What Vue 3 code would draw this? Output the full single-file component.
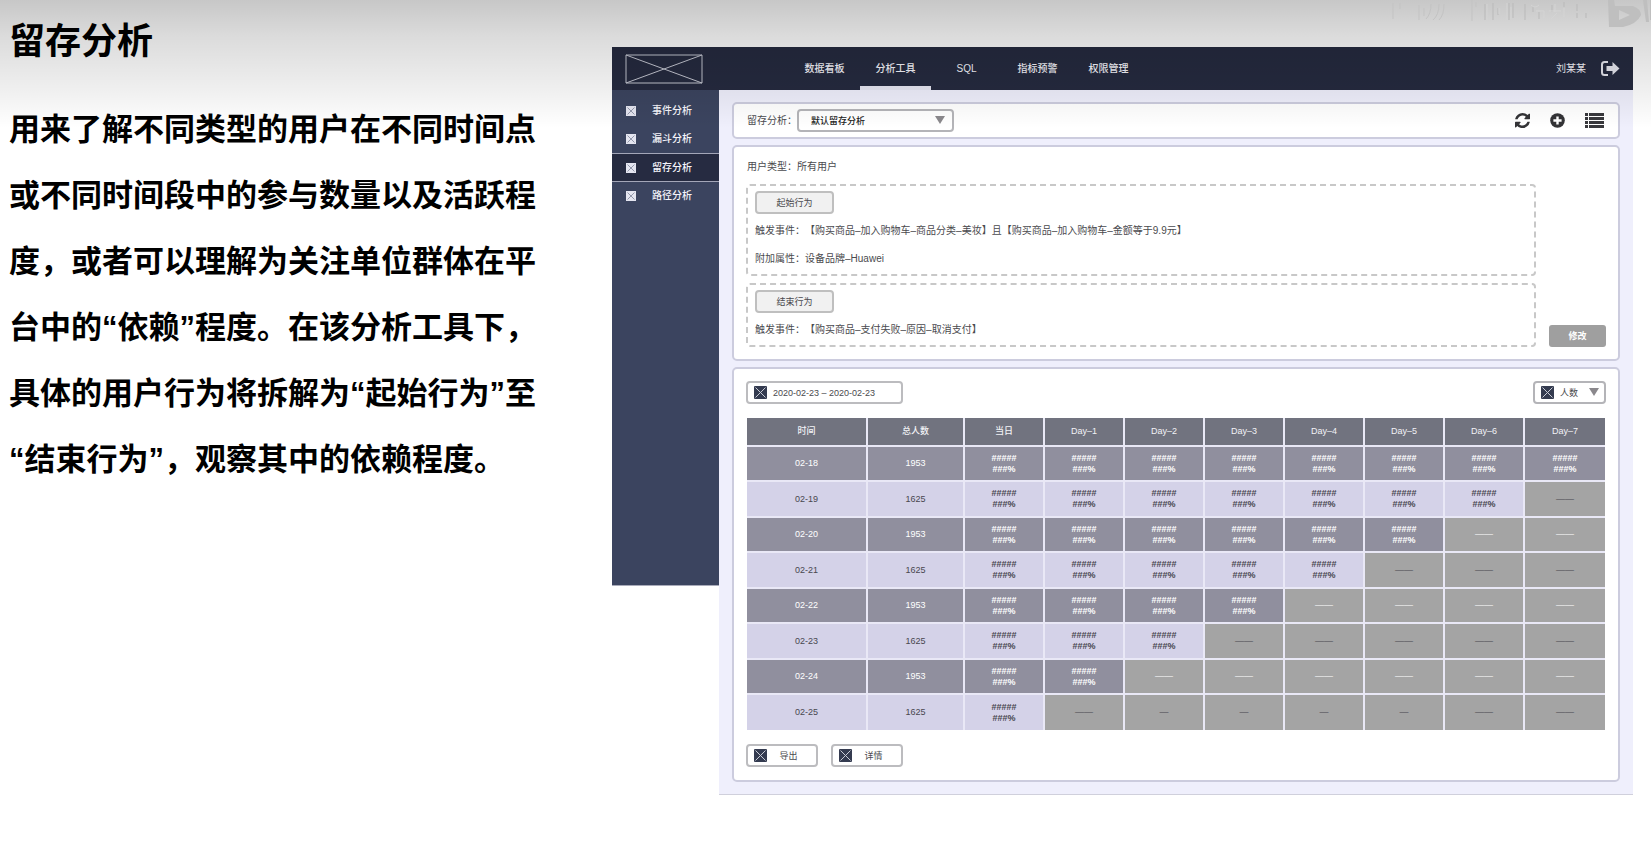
<script setup>
import { ref } from 'vue'

const tabs = ['数据看板', '分析工具', 'SQL', '指标预警', '权限管理']
const activeTab = ref('分析工具')
const menu = ['事件分析', '漏斗分析', '留存分析', '路径分析']
const activeMenu = ref('留存分析')

const columns = ['时间', '总人数', '当日', 'Day–1', 'Day–2', 'Day–3', 'Day–4', 'Day–5', 'Day–6', 'Day–7']
const days = 8
const rows = Array.from({ length: 8 }, (_, i) => ({
  date: `02-${18 + i}`,
  total: i % 2 ? 1625 : 1953,
  cells: Array.from({ length: days }, (_, d) => {
    if (d < days - i) return { filled: true }
    return { filled: false, mark: i === 7 && d > 1 && d < 6 ? '—' : '——' }
  }),
}))
</script>

<template>
  <div class="page">
    <article class="intro">
      <h1>留存分析</h1>
      <p>
        用来了解不同类型的用户在不同时间点<br />或不同时间段中的参与数量以及活跃程<br />度，或者可以理解为关注单位群体在平<br />台中的“依赖”程度。在该分析工具下，<br />具体的用户行为将拆解为“起始行为”至<br />“结束行为”，观察其中的依赖程度。
      </p>
    </article>

    <div class="app">
      <header class="topbar">
        <svg class="logo" viewBox="0 0 78 30" aria-hidden="true">
          <path d="M1 1h76v28H1zM1 1l76 28M77 1L1 29" fill="none" stroke="#c3c5d0" stroke-width="1" />
        </svg>
        <nav class="tabs">
          <a v-for="t in tabs" :key="t" href="#" :class="{ active: t === activeTab }" @click.prevent="activeTab = t">{{ t }}</a>
        </nav>
        <span class="user">刘某某</span>
        <button class="icon-btn" aria-label="退出">
          <svg width="19" height="15" viewBox="0 0 19 15">
            <path d="M7 1H3.500Q1 1 1 3.500v8Q1 14 3.500 14H7" fill="none" stroke="#e6e7ef" stroke-width="2" />
            <path d="M5.500 5h6V1l7 6.500-7 6.500v-4h-6z" fill="#e6e7ef" />
          </svg>
        </button>
      </header>

      <div class="body">
        <aside class="sidebar">
          <a v-for="m in menu" :key="m" href="#" :class="{ active: m === activeMenu }" @click.prevent="activeMenu = m">
            <svg width="10" height="10" viewBox="0 0 10 10" aria-hidden="true">
              <path d="M0 0h10v10H0z" fill="#e4e5f0" />
              <path d="M1.500 1.500l7 7M8.500 1.500l-7 7" stroke="#9398ab" stroke-width="1" />
            </svg>
            {{ m }}
          </a>
        </aside>

        <main class="content">
          <section class="card toolbar">
            <label for="preset">留存分析：</label>
            <span class="picker preset">
              <select id="preset"><option>默认留存分析</option></select>
              <svg class="arrow" width="10" height="8" viewBox="0 0 10 8"><path d="M0 0h10L5 8z" fill="#8a888c" /></svg>
            </span>
            <div class="actions">
              <button class="icon-btn" aria-label="刷新">
                <svg width="15" height="15" viewBox="0 0 1536 1536">
                  <path fill="#333336" d="M1511 928q0 5-1 7-64 268-268 434.500T764 1536q-146 0-282.500-55T238 1324l-129 129q-19 19-45 19t-45-19-19-45V960q0-26 19-45t45-19h448q26 0 45 19t19 45-19 45l-137 137q71 66 161 102t187 36q134 0 250-65t186-179q11-17 53-117 8-23 30-23h192q13 0 22.500 9.500t9.500 22.500zm25-800v448q0 26-19 45t-45 19h-448q-26 0-45-19t-19-45 19-45l138-138Q969 256 768 256q-134 0-250 65T332 500q-11 17-53 117-8 23-30 23H50q-13 0-22.500-9.500T18 608v-7q65-268 270-434.500T768 0q146 0 284 55.500T1297 212l130-129q19-19 45-19t45 19 19 45z" />
                </svg>
              </button>
              <button class="icon-btn" aria-label="新增">
                <svg width="15" height="15" viewBox="0 0 15 15">
                  <circle cx="7.500" cy="7.500" r="7.300" fill="#333336" />
                  <path d="M7.500 3.400v8.200M3.400 7.500h8.200" stroke="#fff" stroke-width="2.400" />
                </svg>
              </button>
              <button class="icon-btn" aria-label="列表">
                <svg width="19" height="15" viewBox="0 0 19 15">
                  <path d="M0 0h3v3H0zM0 4h3v3H0zM0 8h3v3H0zM0 12h3v3H0zM4 0h15v3H4zM4 4h15v3H4zM4 8h15v3H4zM4 12h15v3H4z" fill="#38383c" />
                </svg>
              </button>
            </div>
          </section>

          <section class="card rules">
            <p class="usertype">用户类型：所有用户</p>
            <div class="rules-row">
              <div class="groups">
                <div class="group">
                  <button class="tag">起始行为</button>
                  <p>触发事件：【购买商品–加入购物车–商品分类–美妆】且【购买商品–加入购物车–金额等于9.9元】</p>
                  <p>附加属性：设备品牌–Huawei</p>
                </div>
                <div class="group">
                  <button class="tag">结束行为</button>
                  <p>触发事件：【购买商品–支付失败–原因–取消支付】</p>
                </div>
              </div>
              <button class="modify">修改</button>
            </div>
          </section>

          <section class="card report">
            <div class="filters">
              <button class="box date">
                <svg class="mark" viewBox="0 0 13 13" aria-hidden="true"><rect width="13" height="13" rx="1" fill="#343b50" /><path d="M1.500 1.500l10 10M11.500 1.500l-10 10" stroke="#c9ccd6" /></svg>
                2020-02-23 – 2020-02-23
              </button>
              <span class="picker metric">
                <svg class="mark" viewBox="0 0 13 13" aria-hidden="true"><rect width="13" height="13" rx="1" fill="#343b50" /><path d="M1.500 1.500l10 10M11.500 1.500l-10 10" stroke="#c9ccd6" /></svg>
                <select aria-label="指标"><option>人数</option></select>
                <svg class="arrow" width="10" height="8" viewBox="0 0 10 8"><path d="M0 0h10L5 8z" fill="#8a888c" /></svg>
              </span>
            </div>

            <table>
              <thead>
                <tr><th v-for="c in columns" :key="c" scope="col">{{ c }}</th></tr>
              </thead>
              <tbody>
                <tr v-for="r in rows" :key="r.date">
                  <td>{{ r.date }}</td>
                  <td>{{ r.total }}</td>
                  <td v-for="(c, i) in r.cells" :key="i" :class="c.filled ? 'value' : 'empty'">
                    <template v-if="c.filled">#####<br />###%</template>
                    <template v-else>{{ c.mark }}</template>
                  </td>
                </tr>
              </tbody>
            </table>

            <div class="buttons">
              <button v-for="b in ['导出', '详情']" :key="b" class="box small">
                <svg class="mark" viewBox="0 0 13 13" aria-hidden="true"><rect width="13" height="13" rx="1" fill="#343b50" /><path d="M1.500 1.500l10 10M11.500 1.500l-10 10" stroke="#c9ccd6" /></svg>
                <span>{{ b }}</span>
              </button>
            </div>
          </section>
        </main>
      </div>
    </div>

    <div class="shade"></div>
    <svg class="watermark" width="280" height="40" viewBox="0 0 280 40" aria-hidden="true">
      <path d="M22 3v16M29 3v6M48 5v15M53 8v8M60 4q0 10-5 15M68 4q0 11-6 16M73 4q0 11-5 16M101 0v21M105 2v5" fill="none" stroke="#c3c3c3" />
      <path d="M114 4v16M122 3v17M127 8v7M138 3v17M142 3v15M154 4v16M162 6v6M168 12v7M181 5v7M193 2v5M206 4v7M206 13v5M215 13v5" fill="none" stroke="#b9b9b9" />
      <path d="M116 4v16M128 8v6M136 3v17M140 7v12M160 5q4 4 8 0M165 11h8v7M178 11h12M184 4v8M180 19l6-6M193 8v9" fill="none" stroke="#d4d4d4" />
      <path fill-rule="evenodd" d="M237 0h6l1 6 18 0q8 3 8 9-4 9-18 12h-14zM248 10v10l11-5z" fill="#bfbfbf" />
      <path d="M272 0h4l2 22h-3zM279 0h1v20h-1z" fill="#bfbfbf" />
    </svg>
  </div>
</template>

<style>
body {
  margin: 0;
  background: #fff;
}
</style>

<style scoped>
* {
  box-sizing: border-box;
}
.page {
  position: relative;
  min-height: 100vh;
  display: grid;
  grid-template-columns: 612px 1fr;
  align-items: start;
  overflow: hidden;
  font-family: "Liberation Sans", "Noto Sans CJK SC", sans-serif;
  font-size: 10px;
  line-height: 14px;
  text-spacing-trim: space-all;
  color: #4a4a4e;
}
.shade {
  position: absolute;
  inset: 0 0 auto;
  height: 128px;
  background: linear-gradient(rgba(0, 0, 0, 0.22), rgba(0, 0, 0, 0.14) 36px, rgba(0, 0, 0, 0.06) 92px, rgba(0, 0, 0, 0));
  pointer-events: none;
}
.watermark {
  position: absolute;
  top: 0;
  right: 0;
}
p,
h1 {
  margin: 0;
}
button,
select {
  font: inherit;
  color: inherit;
  padding: 0;
  margin: 0;
}
a {
  color: inherit;
  text-decoration: none;
}

.intro {
  padding: 15px 0 0 9px;
  color: #000;
  font-weight: 700;
  white-space: nowrap;
}
.intro h1 {
  font-size: 36px;
  line-height: 54px;
}
.intro p {
  margin-top: 28px;
  font-size: 31px;
  line-height: 66px;
}

.app {
  margin: 47px 18px 0 0;
  min-width: 0;
}
.topbar {
  display: flex;
  align-items: center;
  height: 43px;
  padding: 0 13px;
  background: #252a3f;
  color: #f4f4fa;
}
.logo {
  width: 78px;
  height: 30px;
}
.tabs {
  display: flex;
  margin: 0 auto 0 86px;
  align-self: stretch;
  font-weight: 500;
}
.tabs a {
  width: 71px;
  line-height: 43px;
  text-align: center;
}
.tabs a.active {
  border-bottom: 4px solid #e6e6f2;
}
.user {
  margin-right: 15px;
}
.icon-btn {
  display: flex;
  border: 0;
  background: none;
}

.body {
  display: flex;
  align-items: flex-start;
}
.sidebar {
  flex: 0 0 107px;
  min-height: 496px;
  padding-top: 7px;
  background: #3b445f;
  border-bottom: 1px solid #a9abba;
  color: #f4f4fa;
  font-weight: 500;
}
.sidebar a {
  display: flex;
  align-items: center;
  gap: 16px;
  height: 28px;
  padding-left: 14px;
}
.sidebar a.active {
  height: 29px;
  border: solid #a3a6b8;
  border-width: 1px 0;
  background: #262b41;
}
.content {
  flex: 1;
  min-width: 0;
  display: flex;
  flex-direction: column;
  gap: 6px;
  padding: 12px 13px;
  background: #efeffc;
  border-bottom: 1px solid #d0d0dc;
}
.card {
  border: 2px solid #ccccde;
  border-radius: 5px;
  background: #fff;
  padding: 0 12px;
}
.toolbar {
  display: flex;
  align-items: center;
  height: 37px;
  padding: 0 14px 0 13px;
}
.toolbar label {
  width: 50px;
}
.picker {
  position: relative;
  display: flex;
  align-items: center;
  height: 23px;
  border: 2px solid #b4b4b8;
  border-radius: 4px;
  background: #fff;
  font-size: 9px;
}
.picker select {
  appearance: none;
  width: 100%;
  height: 100%;
  border: 0;
  background: none;
}
.preset {
  width: 157px;
  color: #222;
  font-weight: 500;
}
.preset select {
  padding-left: 12px;
}
.arrow {
  position: absolute;
  right: 7px;
  top: 5px;
  pointer-events: none;
}
.actions {
  display: flex;
  align-items: center;
  gap: 20px;
  margin-left: auto;
}

.rules {
  padding: 13px 12px 12px;
}
.usertype {
  padding-left: 1px;
}
.rules-row {
  display: flex;
  align-items: flex-end;
  gap: 13px;
  margin-top: 10px;
}
.groups {
  flex: 1;
  display: grid;
  gap: 7px;
}
.group {
  border: 2px dashed #c8c8c8;
  border-radius: 4px;
  padding: 5px 7px;
}
.group p {
  margin-top: 10px;
}
.group p + p {
  margin-top: 14px;
}
.group p:last-child {
  margin-bottom: 3px;
}
.tag {
  display: block;
  width: 79px;
  height: 23px;
  border: 2px solid #bfbfbf;
  border-radius: 4px;
  background: #f1f1f1;
  font-size: 9px;
}
.modify {
  width: 57px;
  height: 22px;
  border: 0;
  border-radius: 3px;
  background: #9f9f9f;
  color: #fff;
  font-size: 9px;
  font-weight: 700;
}

.report {
  padding: 12px 12px 13px;
}
.filters {
  display: flex;
  justify-content: space-between;
}
.box {
  display: flex;
  align-items: center;
  height: 23px;
  padding: 0 6px;
  border: 2px solid #bcbcbf;
  border-radius: 4px;
  background: #fff;
  font-size: 9px;
}
.mark {
  flex: none;
  width: 13px;
  height: 13px;
}
.date {
  width: 157px;
  gap: 6px;
}
.metric {
  width: 73px;
  padding-left: 6px;
}
.metric select {
  padding-left: 6px;
}
.metric .arrow {
  right: 5px;
}
table {
  width: calc(100% - 2px);
  margin: 14px 1px;
  border-spacing: 0;
  table-layout: fixed;
  font-size: 9px;
  line-height: 11px;
  text-align: center;
}
th,
td {
  padding: 0;
  border: solid #e9e8f6;
  border-width: 0 2px 2px 0;
}
th:last-child,
td:last-child {
  border-right-width: 0;
}
th {
  height: 29px;
  background: #71737f;
  color: #f2f2f6;
  font-weight: 500;
}
th:first-child {
  width: 121px;
}
th:nth-child(2) {
  width: 97px;
}
td {
  height: 35px;
  background: #d4d2e8;
  color: #48474f;
}
tr:nth-child(even) td {
  height: 36px;
}
tbody tr:last-child td {
  height: 35px;
  border-bottom-width: 0;
}
tbody tr:nth-child(odd) td {
  background: #908f9e;
  color: #fff;
}
td.value {
  font-weight: 700;
}
tbody tr td.empty,
tbody tr:nth-child(odd) td.empty {
  background: #a4a4a4;
}
.buttons {
  display: flex;
  gap: 13px;
}
.small {
  width: 72px;
}
.small span {
  flex: 1;
  text-align: center;
}
</style>
